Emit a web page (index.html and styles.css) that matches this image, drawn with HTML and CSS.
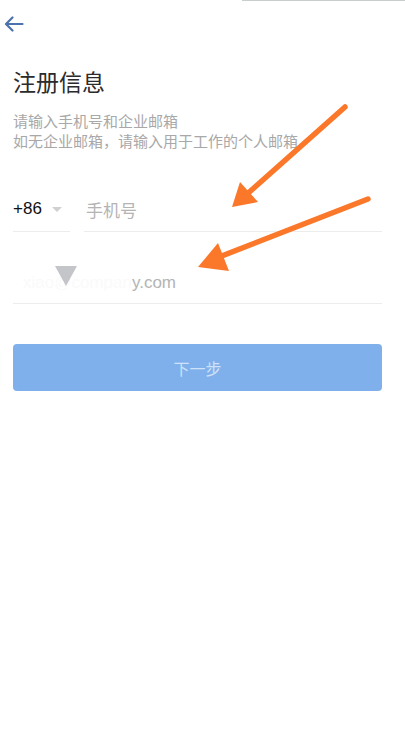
FILE: index.html
```html
<!DOCTYPE html>
<html lang="zh-CN">
<head>
    <meta charset="UTF-8">
    <meta name="viewport" content="width=device-width, initial-scale=1.0">
    <title>注册信息</title>
    <link rel="stylesheet" href="styles.css">
</head>
<body>
    <div class="page">
        <div class="top-line"></div>
        <header class="nav">
            <svg class="back" width="20" height="16" viewBox="0 0 20 16">
                <path d="M18.5 8H2.5M8.5 1.5L2 8l6.5 6.5" fill="none" stroke="#4b72ad" stroke-width="2.2" stroke-linecap="round" stroke-linejoin="round"/>
            </svg>
        </header>

        <h1 class="title">注册信息</h1>
        <p class="hint">请输入手机号和企业邮箱<br>如无企业邮箱，请输入用于工作的个人邮箱</p>

        <div class="row phone-row">
            <div class="code">
                <span>+86</span>
                <span class="caret"></span>
            </div>
            <div class="field">手机号</div>
        </div>

        <div class="row email-row">
            <div class="field email"><span class="blur">xiao@compan</span>y.com</div>
        </div>

        <button class="next" type="button">下一步</button>

        <!-- annotation overlay -->
        <svg class="marks" width="405" height="320" viewBox="0 0 405 320">
            <polygon points="55,266 77,266 66,286" fill="#c3c5c9"/>
            <line x1="345" y1="107" x2="246" y2="195" stroke="#fb772a" stroke-width="5.5" stroke-linecap="round"/>
            <polygon points="232,207 240,182 258,202" fill="#fb772a"/>
            <line x1="368" y1="199" x2="214" y2="259" stroke="#fb772a" stroke-width="5.5" stroke-linecap="round"/>
            <polygon points="198,267 218,243 229,271" fill="#fb772a"/>
        </svg>
    </div>
</body>
</html>
```

FILE: styles.css
```css
body {
    margin: 0;
    padding: 0;
    background-color: #ffffff;
    font-family: "Noto Sans CJK SC", "Noto Sans", sans-serif;
}

.page {
    position: relative;
    width: 405px;
    height: 743px;
    padding: 0 23px 0 13px;
    box-sizing: border-box;
}

.top-line {
    position: absolute;
    top: 0;
    left: 242px;
    right: 0;
    height: 1px;
    background-color: #c9cfcf;
}

.nav {
    height: 44px;
    display: flex;
    align-items: flex-start;
    padding-top: 16px;
    box-sizing: border-box;
    margin-left: -9px;
}

.title {
    margin: 22px 0 0;
    font-size: 23px;
    line-height: 30px;
    font-weight: normal;
    color: #2b2b2b;
}

.hint {
    margin: 15px 0 0;
    font-size: 15px;
    line-height: 20px;
    color: #a8a8a8;
}

.row {
    display: flex;
    height: 48px;
    gap: 14px;
}

.phone-row {
    margin-top: 33px;
}

.email-row {
    margin-top: 24px;
}

.code {
    width: 57px;
    display: flex;
    align-items: center;
    gap: 10px;
    padding-top: 3px;
    border-bottom: 1px solid #ececec;
    font-size: 17px;
    color: #111111;
    font-family: "Liberation Sans", sans-serif;
}

.caret {
    width: 0;
    height: 0;
    border-left: 5px solid transparent;
    border-right: 5px solid transparent;
    border-top: 5px solid #d0d0d0;
}

.field {
    flex: 1;
    display: flex;
    align-items: center;
    padding-top: 3px;
    border-bottom: 1px solid #ececec;
    font-size: 17px;
    color: #b4b4b4;
    padding-left: 2px;
}

.email {
    padding-left: 10px;
    padding-top: 6px;
    font-family: "Liberation Sans", sans-serif;
}

.blur {
    color: #fafafa;
}

.next {
    display: block;
    width: 100%;
    height: 47px;
    margin-top: 40px;
    border: none;
    border-radius: 4px;
    background-color: #7fb0eb;
    color: #cfe0f7;
    font-size: 16px;
    font-family: inherit;
}

.marks {
    position: absolute;
    top: 0;
    left: 0;
    pointer-events: none;
}
```
